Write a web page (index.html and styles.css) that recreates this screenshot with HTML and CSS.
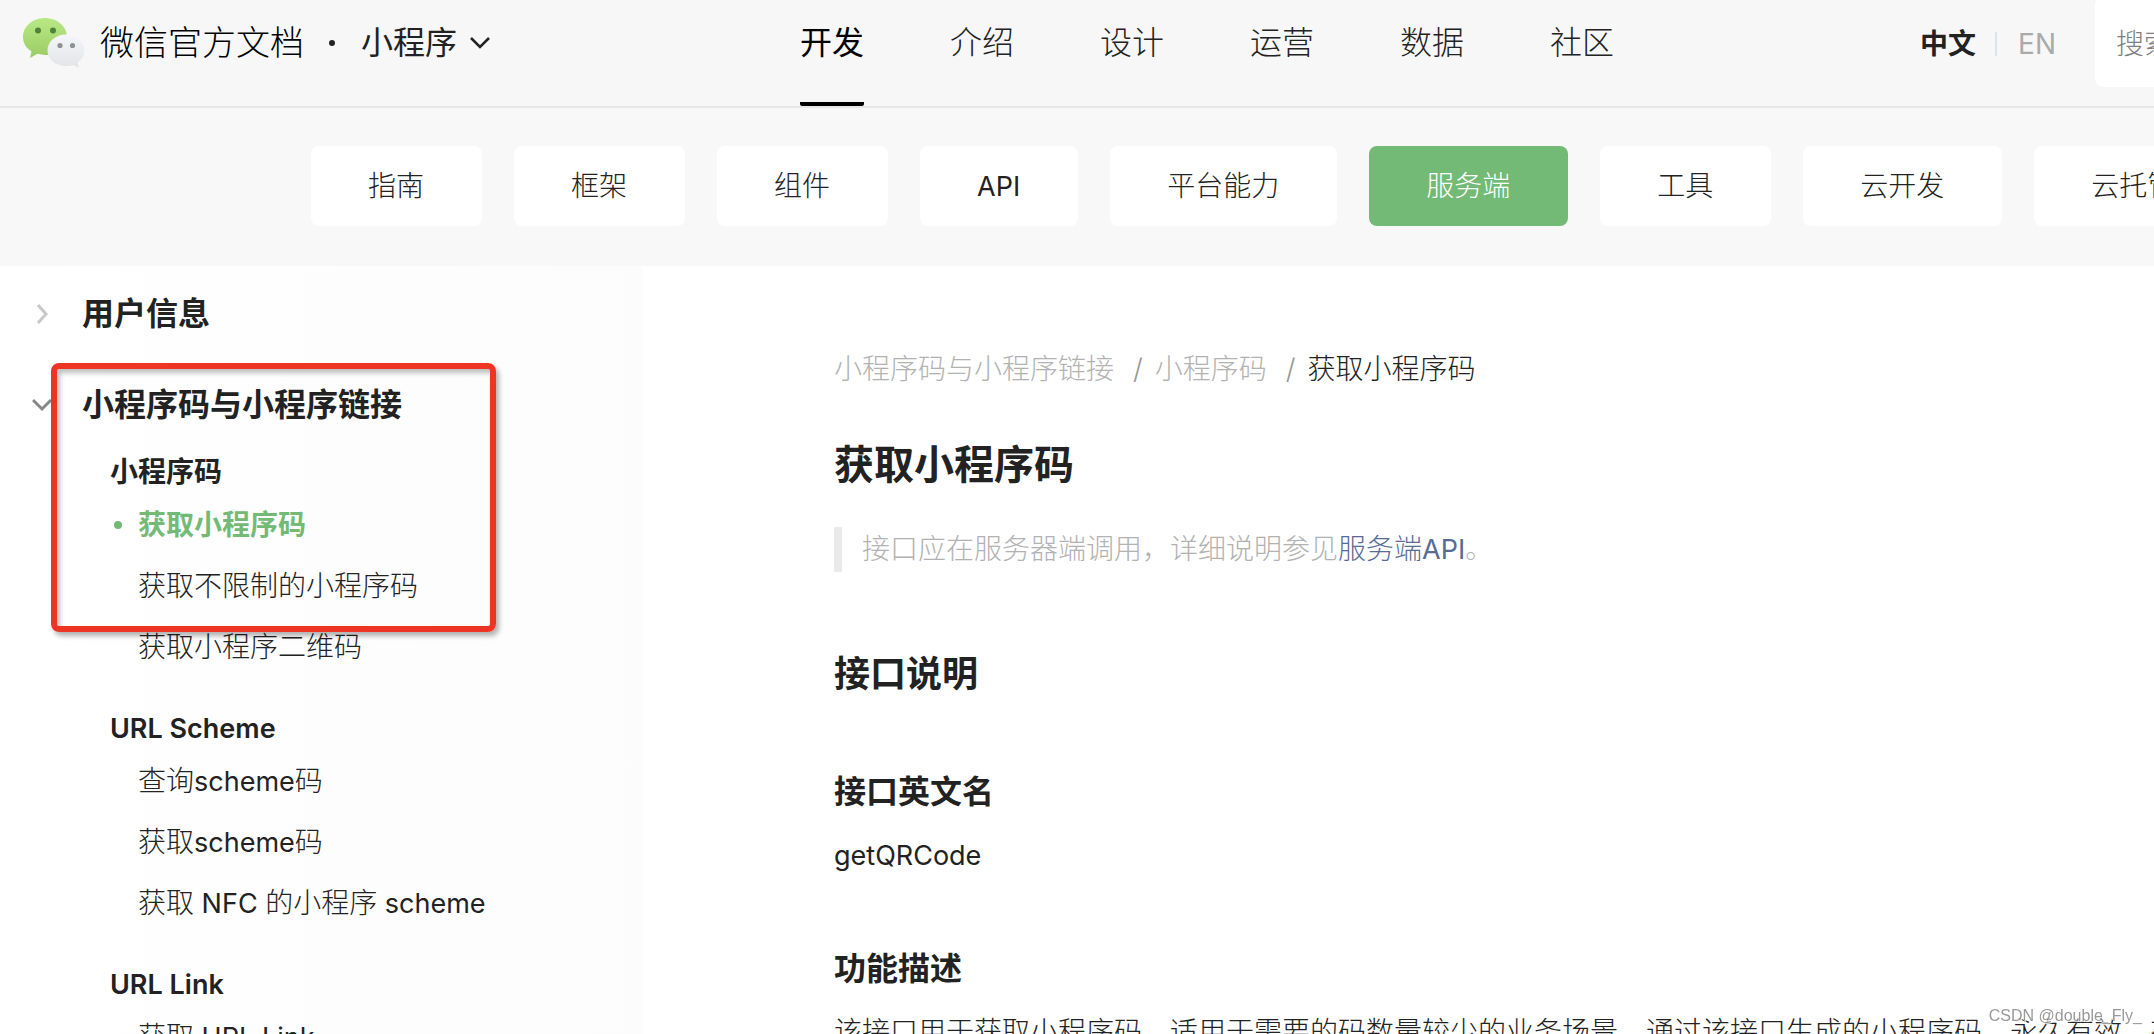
FILE: index.html
```html
<!DOCTYPE html>
<html lang="zh-CN">
<head>
<meta charset="utf-8">
<meta name="viewport" content="width=device-width, initial-scale=1">
<title>获取小程序码 | 微信官方文档</title>
<link rel="stylesheet" href="styles.css">
</head>
<body>
<header class="header">
  <div class="brand">
    <svg class="logo" viewBox="0 0 64 52" aria-hidden="true">
      <defs>
        <linearGradient id="green" x1="0" y1="0" x2="0" y2="1"><stop offset="0" stop-color="#b9e986"/><stop offset="1" stop-color="#9ccb64"/></linearGradient>
        <linearGradient id="silver" x1="0" y1="0" x2="0" y2="1"><stop offset="0" stop-color="#f5f6fb"/><stop offset="1" stop-color="#e2e4e6"/></linearGradient>
      </defs>
      <path fill="url(#green)" d="M23 1C10.500 1 1 9.500 1 20c0 6 3 11 8.500 14.500L8 41l7.500-4.200c2.500.7 5 1.100 7.500 1.100 12.500 0 22-8 22-18S35.500 1 23 1z"/>
      <ellipse cx="16" cy="13.500" rx="3" ry="3" fill="#4f8339"/>
      <ellipse cx="31" cy="13.500" rx="3" ry="3" fill="#4f8339"/>
      <path fill="url(#silver)" d="M44 17.500c-10.500 0-18.500 7-18.500 16S33.500 49 44 49c2.500 0 5-.4 7-1.100L57 51l-1.300-5.500C60 42.600 62.500 38.500 62.500 33.500c0-9-8-16-18.500-16z"/>
      <circle cx="38" cy="28.500" r="2.600" fill="#8c9292"/>
      <circle cx="50.500" cy="28.500" r="2.600" fill="#8c9292"/>
    </svg>
    <a class="brand-name" href="#">微信官方文档</a>
    <span class="brand-dot"></span>
    <button class="product" type="button">小程序
      <svg class="product-arrow" viewBox="0 0 22 14" aria-hidden="true"><path d="M2 2l9 9 9-9" fill="none" stroke="#222" stroke-width="2.500"/></svg>
    </button>
  </div>
  <nav class="main-nav">
    <a class="main-link is-active" href="#">开发</a>
    <a class="main-link" href="#">介绍</a>
    <a class="main-link" href="#">设计</a>
    <a class="main-link" href="#">运营</a>
    <a class="main-link" href="#">数据</a>
    <a class="main-link" href="#">社区</a>
  </nav>
  <div class="tools">
    <a class="lang is-active" href="#">中文</a>
    <span class="lang-divider"></span>
    <a class="lang" href="#">EN</a>
    <input class="search" type="search" placeholder="搜索" aria-label="搜索">
  </div>
</header>

<nav class="sub-nav">
  <a class="tab" href="#">指南</a>
  <a class="tab" href="#">框架</a>
  <a class="tab" href="#">组件</a>
  <a class="tab" href="#"><span class="latin">API</span></a>
  <a class="tab" href="#">平台能力</a>
  <a class="tab is-active" href="#">服务端</a>
  <a class="tab" href="#">工具</a>
  <a class="tab" href="#">云开发</a>
  <a class="tab" href="#">云托管</a>
</nav>

<div class="layout">
  <aside class="sidebar">
    <button class="group" type="button">
      <svg class="group-arrow" viewBox="0 0 20 20" aria-hidden="true"><path d="M6 1l8 9-8 9" fill="none" stroke="#c8c8c8" stroke-width="3"/></svg>
      用户信息
    </button>
    <button class="group" type="button">
      <svg class="group-arrow" viewBox="0 0 20 20" aria-hidden="true"><path d="M1 5l9 9 9-9" fill="none" stroke="#888" stroke-width="3"/></svg>
      小程序码与小程序链接
    </button>
    <section class="section">
      <h4 class="section-title">小程序码</h4>
      <a class="doc-link is-active" href="#">获取小程序码</a>
      <a class="doc-link" href="#">获取不限制的小程序码</a>
      <a class="doc-link" href="#">获取小程序二维码</a>
    </section>
    <section class="section">
      <h4 class="section-title"><span class="latin">URL Scheme</span></h4>
      <a class="doc-link" href="#">查询<span class="latin">scheme</span>码</a>
      <a class="doc-link" href="#">获取<span class="latin">scheme</span>码</a>
      <a class="doc-link" href="#">获取<span class="latin"> NFC </span>的小程序<span class="latin"> scheme</span></a>
    </section>
    <section class="section">
      <h4 class="section-title"><span class="latin">URL Link</span></h4>
      <a class="doc-link" href="#">获取<span class="latin"> URL Link</span></a>
    </section>
    <div class="highlight"></div>
  </aside>

  <main class="article">
    <nav class="breadcrumb">
      <a class="crumb" href="#">小程序码与小程序链接</a><span class="slash">/</span><a class="crumb" href="#">小程序码</a><span class="slash">/</span><span class="crumb is-current">获取小程序码</span>
    </nav>
    <h1>获取小程序码</h1>
    <blockquote class="note">接口应在服务器端调用，详细说明参见<a class="note-link" href="#">服务端<span class="latin">API</span></a>。</blockquote>
    <h2>接口说明</h2>
    <h3>接口英文名</h3>
    <p class="text"><span class="latin">getQRCode</span></p>
    <h3>功能描述</h3>
    <p class="text">该接口用于获取小程序码，适用于需要的码数量较少的业务场景。通过该接口生成的小程序码，永久有效，有数量限制</p>
  </main>
</div>
<div class="watermark">CSDN @double_Fly_</div>
</body>
</html>
```
FILE: styles.css
```css
* {
  box-sizing: border-box;
}

body {
  margin: 0;
  height: 100vh;
  overflow: hidden;
  background: #fff;
  color: #222;
  font-family: Inter, "Noto Sans CJK SC", sans-serif;
  font-size: 28px;
  font-weight: 300;
  line-height: 48px;
}

a {
  color: inherit;
  text-decoration: none;
}

button {
  padding: 0;
  border: 0;
  background: none;
  color: inherit;
  font: inherit;
}

.latin {
  font-size: 27px;
  font-weight: 400;
}

/* Top bar */
.header {
  display: flex;
  height: 108px;
  overflow: hidden;
  border-bottom: 2px solid #e8e8e8;
  background: #f7f7f7;
}

.brand {
  display: flex;
  flex: 0 0 800px;
  align-items: center;
  height: 86px;
  padding-left: 22px;
}

.logo {
  width: 64px;
  height: 52px;
}

.brand-name {
  margin-left: 14px;
  color: #000;
  font-size: 34px;
}

.brand-dot {
  width: 6px;
  height: 6px;
  margin: 0 26px 0 25px;
  border-radius: 50%;
  background: #222;
}

.product {
  display: flex;
  align-items: center;
  gap: 12px;
  font-size: 32px;
  font-weight: 400;
}

.product-arrow {
  width: 22px;
  height: 14px;
}

.main-nav {
  display: flex;
  flex: none;
  gap: 86px;
}

.main-link {
  height: 106px;
  font-size: 32px;
  line-height: 86px;
}

.main-link.is-active {
  border-bottom: 4px solid #000;
  border-radius: 2px;
  color: #000;
  font-weight: 400;
}

.tools {
  display: flex;
  flex: none;
  align-items: center;
  height: 87px;
  margin-left: 306px;
}

.lang {
  color: #aaa;
  font-weight: 400;
}

.lang.is-active {
  color: #222;
  font-weight: 700;
}

.lang-divider {
  width: 2px;
  height: 24px;
  margin: 0 21px 0 19px;
  background: #dfe3e8;
}

.search {
  width: 360px;
  height: 87px;
  margin-left: 39px;
  padding: 0 21px;
  border: 0;
  border-radius: 4px 8px 8px 8px;
  background: #fff;
  color: #222;
  font: inherit;
}

.search::placeholder {
  color: #808080;
}

/* Documentation tabs */
.sub-nav {
  display: flex;
  gap: 32px;
  height: 158px;
  padding: 38px 0 40px 311px;
  overflow: hidden;
  background: #f8f8f8;
}

.tab {
  flex: none;
  padding: 0 58px 0 57px;
  border-radius: 8px;
  background: #fff;
  line-height: 80px;
}

.tab.is-active {
  background: #73ba76;
  color: #fff;
}

.layout {
  display: flex;
}

/* Sidebar */
.sidebar {
  position: relative;
  flex: 0 0 642px;
  padding-top: 2px;
  background: linear-gradient(to right, #fff, #fcfcfc);
}

.group {
  display: flex;
  align-items: center;
  gap: 30px;
  height: 91px;
  padding-left: 32px;
  font-size: 32px;
  font-weight: 600;
}

.group-arrow {
  width: 20px;
  height: 20px;
}

.section {
  margin-bottom: 28px;
  padding-left: 110px;
}

.section-title {
  margin: 0;
  font-size: 28px;
  font-weight: 600;
  line-height: 45px;
}

.section-title .latin {
  font-weight: 600;
}

.doc-link {
  display: block;
  position: relative;
  padding-left: 28px;
  line-height: 61px;
}

.doc-link.is-active {
  color: #73ba76;
  font-weight: 600;
}

.doc-link.is-active::before {
  content: "";
  position: absolute;
  top: 26px;
  left: 4px;
  width: 8px;
  height: 8px;
  border-radius: 50%;
  background: #73ba76;
}

.highlight {
  position: absolute;
  top: 97px;
  left: 51px;
  width: 445px;
  height: 269px;
  border: 6px solid #ee3524;
  border-radius: 8px;
  box-shadow: 3px 4px 5px rgba(0, 0, 0, 0.3), inset 3px 4px 5px rgba(0, 0, 0, 0.25);
}

/* Article */
.article {
  flex: 1;
  min-width: 0;
  padding: 81px 0 0 192px;
}

.breadcrumb {
  color: #b2b2b2;
  line-height: 44px;
}

.slash {
  margin: 0 12px 0 19px;
  color: #999;
}

.crumb.is-current {
  color: #222;
}

h1,
h2,
h3 {
  margin: 0;
  font-weight: 600;
}

h1 {
  margin-top: 44px;
  font-size: 40px;
  line-height: 60px;
}

.note {
  margin: 32px 0 0;
  padding-left: 20px;
  border-left: 8px solid #eaeaea;
  color: #b2b2b2;
  line-height: 45px;
}

.note-link {
  color: #576b95;
}

h2 {
  margin: 75px 0 67px;
  font-size: 36px;
  line-height: 54px;
}

h3 {
  margin-top: 65px;
  font-size: 32px;
  line-height: 48px;
}

.text {
  margin: 15px 0 0;
  white-space: nowrap;
}

.watermark {
  position: fixed;
  right: 12px;
  bottom: 8px;
  color: #999;
  font-family: "Liberation Sans", sans-serif;
  font-size: 16px;
  font-weight: 400;
  line-height: 20px;
  text-shadow: 1px 1px 1px #fff, -1px -1px 1px #fff;
}
```
